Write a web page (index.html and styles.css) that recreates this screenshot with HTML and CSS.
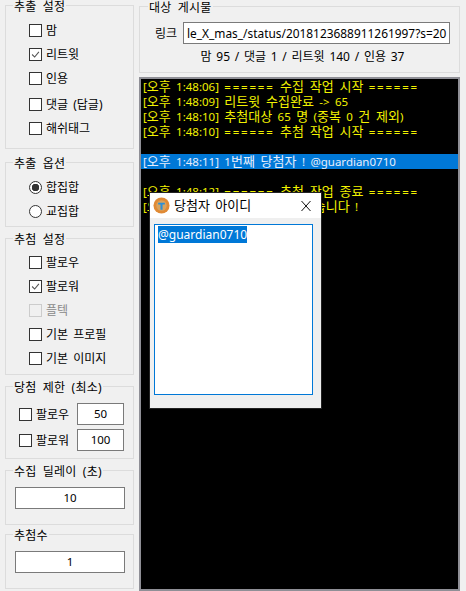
FILE: index.html
```html
<!DOCTYPE html>
<html lang="ko">
<head>
<meta charset="utf-8">
<title>추첨</title>
<link rel="stylesheet" href="styles.css">
</head>
<body>
<div class="app">
  <aside class="side">
    <section class="group g1">
      <h2 class="legend">추출 설정</h2>
      <div class="row"><span class="box"></span>맘</div>
      <div class="row"><span class="box"><svg viewBox="0 0 13 13"><path d="M2.5 6.5l3 3 5-6"/></svg></span>리트윗</div>
      <div class="row"><span class="box"></span>인용</div>
      <div class="row wide"><span class="box"></span>댓글 (답글)</div>
      <div class="row"><span class="box"></span>해쉬태그</div>
    </section>
    <section class="group g2">
      <h2 class="legend">추출 옵션</h2>
      <div class="row"><span class="radio on"></span>합집합</div>
      <div class="row r2"><span class="radio"></span>교집합</div>
    </section>
    <section class="group g3">
      <h2 class="legend">추첨 설정</h2>
      <div class="row"><span class="box"></span>팔로우</div>
      <div class="row"><span class="box"><svg viewBox="0 0 13 13"><path d="M2.5 6.5l3 3 5-6"/></svg></span>팔로워</div>
      <div class="row off"><span class="box"></span>플텍</div>
      <div class="row"><span class="box"></span>기본 프로필</div>
      <div class="row"><span class="box"></span>기본 이미지</div>
    </section>
    <section class="group g4">
      <h2 class="legend">당첨 제한 (최소)</h2>
      <div class="limit"><span class="box"></span><span class="limit-label">팔로우</span><div class="field short">50</div></div>
      <div class="limit"><span class="box"></span><span class="limit-label">팔로워</span><div class="field short">100</div></div>
    </section>
    <section class="group g5">
      <h2 class="legend">수집 딜레이 (초)</h2>
      <div class="field">10</div>
    </section>
    <section class="group g6">
      <h2 class="legend">추첨수</h2>
      <div class="field">1</div>
    </section>
  </aside>
  <main class="main">
    <section class="group target">
      <h2 class="legend">대상 게시물</h2>
      <div class="link-row"><span class="link-label">링크</span><div class="link-input">le_X_mas_/status/2018123688911261997?s=20</div></div>
      <p class="stats">맘 95 / 댓글 1 / 리트윗 140 / 인용 37</p>
    </section>
    <div class="log">
      <div class="line">[<span class="k">오후</span> 1:48:06] <span class="eq">======</span> <span class="k">수집 작업 시작</span> <span class="eq">======</span></div>
      <div class="line">[<span class="k">오후</span> 1:48:09] <span class="k">리트윗 수집완료</span> -&gt; 65</div>
      <div class="line">[<span class="k">오후</span> 1:48:10] <span class="k">추첨대상</span> 65 <span class="k">명</span> (<span class="k">중복</span> 0 <span class="k">건 제외</span>)</div>
      <div class="line">[<span class="k">오후</span> 1:48:10] <span class="eq">======</span> <span class="k">추첨 작업 시작</span> <span class="eq">======</span></div>
      <div class="line"></div>
      <div class="line sel">[<span class="k">오후</span> 1:48:11] 1<span class="k">번째 당첨자</span> ! @guardian0710</div>
      <div class="line"></div>
      <div class="line">[<span class="k">오후</span> 1:48:12] <span class="eq">======</span> <span class="k">추첨 작업 종료</span> <span class="eq">======</span></div>
      <div class="line">[<span class="k">오후</span> 1:48:12] <span class="k">추첨이 완료되었습니다</span> !</div>
    </div>
  </main>
</div>
<div class="dialog">
  <div class="titlebar">
    <svg class="appicon" viewBox="0 0 18 18"><circle cx="9" cy="9" r="8.5" fill="#e08a35"/><circle cx="9" cy="9" r="5.5" fill="#d9a35e"/><path d="M5.5 6h7v2h-2.4v5.5H7.9V8H5.5z" fill="#2b8fd8"/></svg>
    <span class="dialog-title">당첨자 아이디</span>
    <svg class="close" viewBox="0 0 10 10"><path d="M.5.5l9 10M9.5.5l-9 10"/></svg>
  </div>
  <div class="dialog-body">
    <div class="textarea"><span class="picked">@guardian0710</span></div>
  </div>
</div>
</body>
</html>
```
FILE: styles.css
```css
* { box-sizing: border-box; }
html, body { margin: 0; height: 100%; }
body {
  position: relative;
  overflow: hidden;
  background: #f0f0f0;
  color: #000;
  font: 12px/15px "Noto Sans", "Noto Sans CJK KR", sans-serif;
}
.app { display: flex; align-items: flex-start; height: 591px; padding-left: 5px; }
.side { width: 129px; flex: none; padding-top: 5px; }
.main { width: 321px; margin-left: 5px; padding-top: 6px; }

.group { position: relative; border: 1px solid #dcdcdc; }
.legend {
  position: absolute;
  left: 7px;
  top: -6px;
  margin: 0;
  padding: 0 1px;
  background: #f0f0f0;
  font: inherit;
  line-height: 13px;
  white-space: nowrap;
  word-spacing: 3px;
  letter-spacing: .2px;
}
.target .legend { left: 8px; }

.g1 { height: 144px; padding: 18px 0 0 23px; }
.g2 { height: 65px; margin-top: 13px; padding: 18px 0 0 23px; }
.g3 { height: 137px; margin-top: 11px; padding: 17px 0 0 23px; }
.g4 { height: 73px; margin-top: 11px; padding: 16px 8px 0 13px; }
.g5 { height: 55px; margin-top: 11px; padding: 16px 8px 0 9px; }
.g6 { height: 55px; margin-top: 9px; padding: 16px 8px 0 9px; }

.row { display: flex; align-items: center; gap: 4px; height: 13px; margin-bottom: 11px; white-space: nowrap; word-spacing: 2px; }
.row.wide { margin-top: 13px; }
.row.r2 { margin-top: 9px; }
.off { color: #8a8a8a; }

.box {
  flex: none;
  width: 13px;
  height: 13px;
  border: 1px solid #333;
  background: #fff;
}
.box svg { display: block; width: 11px; height: 11px; fill: none; stroke: #555; stroke-width: 1.3; }
.off .box { border-color: #ccc; background: #f0f0f0; }
.radio {
  flex: none;
  width: 13px;
  height: 13px;
  border: 1px solid #333;
  border-radius: 50%;
  background: #fff;
}
.radio.on { background: radial-gradient(circle, #333 0 3.5px, #fff 4px); }

.limit { display: flex; align-items: center; height: 22px; margin-bottom: 4px; }
.limit-label { margin-left: 4px; width: 41px; }
.field {
  height: 22px;
  border: 1px solid #7a7a7a;
  background: #fff;
  font-size: 11.5px;
  text-align: center;
  line-height: 20px;
}
.field.short { width: 47px; }

.target { height: 67px; padding: 15px 9px 0 15px; }
.link-row { display: flex; align-items: center; gap: 6px; }
.link-label { flex: none; width: 22px; white-space: nowrap; }
.link-input {
  width: 267px;
  height: 22px;
  padding-left: 3px;
  overflow: hidden;
  border: 1px solid #7a7a7a;
  background: #fff;
  font-size: 11.9px;
  line-height: 20px;
  white-space: nowrap;
}
.stats { margin: 5px 0 0; text-align: center; word-spacing: 1.6px; }

.log {
  height: 514px;
  margin-top: 4px;
  border: 2px solid #8f8f96;
  background: #000;
  color: #f2f200;
  font-size: 11.5px;
}
.line { height: 15px; padding-left: 2px; white-space: nowrap; word-spacing: 2.4px; }
.k { font-size: 13px; }
.eq { letter-spacing: 1.8px; }
.sel { background: #0078d7; color: #e6eefc; }

.dialog {
  position: absolute;
  left: 150px;
  top: 193px;
  width: 171px;
  height: 215px;
  background: #efefef;
  box-shadow: 0 0 0 1px #222;
}
.titlebar { display: flex; align-items: center; height: 25px; padding-left: 3px; background: #fff; }
.appicon { width: 17px; height: 17px; flex: none; }
.dialog-title { margin-left: 4px; font-size: 13px; word-spacing: 2px; }
.close { width: 10px; height: 11px; margin-left: auto; margin-right: 10px; fill: none; stroke: #111; stroke-width: 1; }
.dialog-body { padding: 6px 8px 0 4px; }
.textarea { height: 171px; padding: 2px 3px; border: 1px solid #0078d7; background: #fff; line-height: 15px; }
.picked { background: #0078d7; color: #fff; }
```
